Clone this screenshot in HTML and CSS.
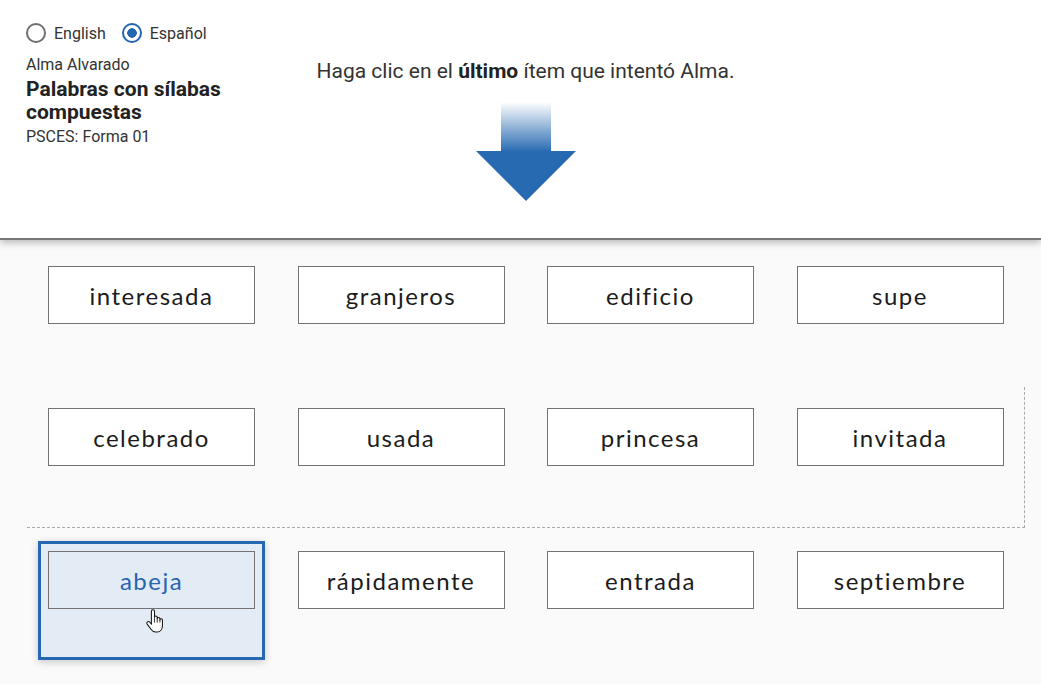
FILE: index.html
```html
<!DOCTYPE html>
<html>
<head lang="es">
    <meta charset="UTF-8">
    <title>Palabras con sílabas compuestas</title>
    <link rel="stylesheet" href="styles.css">
</head>
<body>
    <header class="top-bar">
        <div class="student-panel">
            <div class="lang-switch">
                <label class="lang-option"><span class="radio"></span>English</label>
                <label class="lang-option"><span class="radio radio-on"></span>Español</label>
            </div>
            <div class="student-name">Alma Alvarado</div>
            <h1 class="task-title">Palabras con sílabas compuestas</h1>
            <div class="task-form">PSCES: Forma 01</div>
        </div>
        <div class="prompt">
            <p class="prompt-text">Haga clic en el <b>último</b> ítem que intentó Alma.</p>
            <svg class="prompt-arrow" width="100" height="99" viewBox="0 0 100 99">
                <defs>
                    <linearGradient id="shaft" x1="0" y1="0" x2="0" y2="1">
                        <stop offset="0" stop-color="#ffffff"/>
                        <stop offset="1" stop-color="#276ab1"/>
                    </linearGradient>
                </defs>
                <rect x="25" y="0" width="50" height="50" fill="url(#shaft)"/>
                <polygon points="0,49 100,49 50,99" fill="#276ab1"/>
            </svg>
        </div>
    </header>

    <main class="board">
        <div class="row">
            <div class="item"><div class="word">interesada</div></div>
            <div class="item"><div class="word">granjeros</div></div>
            <div class="item"><div class="word">edificio</div></div>
            <div class="item"><div class="word">supe</div></div>
        </div>
        <div class="row row-current">
            <div class="item"><div class="word">celebrado</div></div>
            <div class="item"><div class="word">usada</div></div>
            <div class="item"><div class="word">princesa</div></div>
            <div class="item"><div class="word">invitada</div></div>
        </div>
        <div class="row row-last">
            <div class="item item-picked">
                <div class="word">abeja</div>
                <svg class="hand" width="19" height="24" viewBox="0 0 18 23">
                    <path d="M6 2.5C6 1.4 6.8 0.8 7.5 0.8C8.3 0.8 9 1.4 9 2.5V8C9 7.2 9.7 6.8 10.3 6.8C11 6.8 11.6 7.3 11.6 8.2V9.3C11.6 8.6 12.3 8.2 12.9 8.2C13.6 8.2 14.2 8.7 14.2 9.5V10.5C14.2 9.8 14.8 9.4 15.4 9.4C16.1 9.4 16.6 10 16.6 10.7V16C16.6 19.5 14.5 22 11.5 22H10C8 22 6.8 21 5.8 19.6L2 14.5C1.4 13.7 1.6 12.8 2.3 12.3C3 11.8 3.9 12 4.5 12.7L6 14.5Z" fill="#ffffff" stroke="#111111" stroke-width="1" stroke-linejoin="round"/>
                    <path d="M9 8.5V13M11.6 9.3V13M14.2 10.5V13" stroke="#111111" stroke-width="0.8" fill="none"/>
                </svg>
            </div>
            <div class="item"><div class="word">rápidamente</div></div>
            <div class="item"><div class="word">entrada</div></div>
            <div class="item"><div class="word">septiembre</div></div>
        </div>
    </main>
</body>
</html>
```

FILE: styles.css
```css
*{
    margin: 0;
    padding: 0;
    box-sizing: border-box;
}
body{
    background: #fafafa;
    font-family: Roboto, "Liberation Sans", sans-serif;
    color: #222;
    min-height: 100vh;
}
.top-bar{
    display: grid;
    height: 240px;
    padding-left: 10px;
    background: #fff;
    border-bottom: 2px solid #777;
    box-shadow: 0 2px 8px rgba(0,0,0,0.3);
    position: relative;
    z-index: 2;
}
.student-panel,
.prompt{
    grid-area: 1 / 1;
}
.student-panel{
    justify-self: start;
    margin-left: 16px;
    width: 240px;
    padding-top: 22px;
}
.lang-switch{
    display: flex;
    gap: 16px;
    height: 22px;
    align-items: center;
}
.lang-option{
    display: flex;
    align-items: center;
    gap: 8px;
    font-size: 16px;
    color: #333;
}
.radio{
    width: 20px;
    height: 20px;
    border: 2px solid #6f6f6f;
    border-radius: 50%;
}
.radio-on{
    border-color: #2566b0;
    background: radial-gradient(circle, #2566b0 4.5px, transparent 5px);
}
.student-name{
    margin-top: 12px;
    font-size: 16px;
    line-height: 18px;
    color: #333;
}
.task-title{
    margin-top: 4px;
    font-size: 21px;
    line-height: 23px;
    font-weight: bold;
    color: #222;
}
.task-form{
    margin-top: 4px;
    font-size: 16px;
    line-height: 18px;
    color: #333;
}
.prompt{
    justify-self: center;
    padding-top: 59px;
    text-align: center;
}
.prompt-text{
    font-size: 21px;
    line-height: 24px;
    color: #333;
}
.prompt-text b{
    color: #222;
}
.prompt-arrow{
    display: block;
    margin: 19px auto 0;
}
.board{
    padding-top: 5px;
}
.row{
    display: grid;
    grid-template-columns: repeat(4, 227px);
    column-gap: 22.5px;
    align-items: start;
    width: 998px;
    height: 142px;
    margin-left: 27px;
    padding: 11px 0 0 11px;
}
.row-current{
    height: 141px;
    border-right: 1px dashed #aaa;
    border-bottom: 1px dashed #aaa;
}
.row-last{
    padding-top: 13px;
}
.item{
    position: relative;
    height: 119px;
    padding: 7px;
    border: 3px solid transparent;
}
.item-picked{
    border-color: #2567b1;
    background: #e3ebf4;
    box-shadow: 0 2px 8px rgba(0,0,0,0.2);
}
.word{
    display: flex;
    align-items: center;
    justify-content: center;
    height: 58px;
    border: 1px solid #737373;
    background: #fff;
    font-family: Lato, "Noto Sans", sans-serif;
    font-size: 24px;
    letter-spacing: 1.5px;
    color: #1c1c1c;
}
.item-picked .word{
    background: transparent;
    color: #2566b0;
}
.hand{
    position: absolute;
    left: 104px;
    top: 65px;
}
```
